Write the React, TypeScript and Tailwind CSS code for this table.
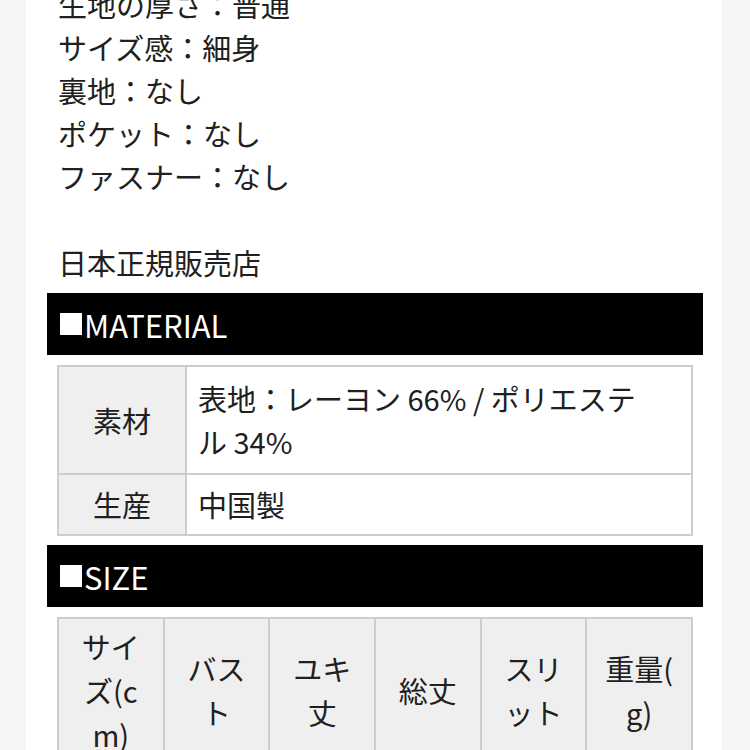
const specs = [
  '生地の厚さ：普通',
  'サイズ感：細身',
  '裏地：なし',
  'ポケット：なし',
  'ファスナー：なし',
]

const sizeHeaders = ['サイズ(cm)', 'バスト', 'ユキ丈', '総丈', 'スリット', '重量(g)']

function SectionBar({ title }: { title: string }) {
  return (
    <div className="h-[62px] bg-black flex items-center pl-[13px] text-white text-[31px] leading-none">
      <span className="inline-block w-[22px] h-[22px] bg-white mr-[2px]" />
      <span>{title}</span>
    </div>
  )
}

export default function App() {
  return (
    <div
      className="w-[750px] h-[750px] overflow-hidden bg-[#f6f6f6] flex text-[#202020]"
      style={{ fontFamily: '"Noto Sans CJK JP", "Noto Sans", sans-serif' }}
    >
      <div className="w-[696px] ml-[26px] bg-white pl-[21px] pr-[19px]">
        {/* Spec list */}
        <div className="mt-[-17px] pl-[11px] text-[29px] leading-[43px]">
          {specs.map((s) => (
            <p key={s}>{s}</p>
          ))}
          <p>&nbsp;</p>
          <p>日本正規販売店</p>
        </div>

        {/* MATERIAL */}
        <div className="mt-[9px]">
          <SectionBar title="MATERIAL" />
        </div>
        <div className="pl-[10px] mt-[10px]">
          <table className="w-[636px] border-collapse text-[29px] leading-[43px]">
            <tbody>
              <tr>
                <td className="w-[128px] border-2 border-[#cdcdcd] bg-[#efefef] text-center py-[10px]">
                  素材
                </td>
                <td className="border-2 border-[#cdcdcd] py-[10px] pl-[11px] pr-[40px]">
                  表地：レーヨン 66% / ポリエステル 34%
                </td>
              </tr>
              <tr>
                <td className="border-2 border-[#cdcdcd] bg-[#efefef] text-center py-[8px]">
                  生産
                </td>
                <td className="border-2 border-[#cdcdcd] py-[8px] pl-[11px]">中国製</td>
              </tr>
            </tbody>
          </table>
        </div>

        {/* SIZE */}
        <div className="mt-[9px]">
          <SectionBar title="SIZE" />
        </div>
        <div className="pl-[10px] mt-[10px]">
          <table className="w-[636px] table-fixed border-collapse text-[29px] leading-[44px]">
            <tbody>
              <tr>
                {sizeHeaders.map((h) => (
                  <td
                    key={h}
                    className="border-2 border-[#cdcdcd] bg-[#efefef] text-center align-middle px-[15px] py-[5px] [line-break:anywhere]"
                  >
                    {h}
                  </td>
                ))}
              </tr>
            </tbody>
          </table>
        </div>
      </div>
    </div>
  )
}
